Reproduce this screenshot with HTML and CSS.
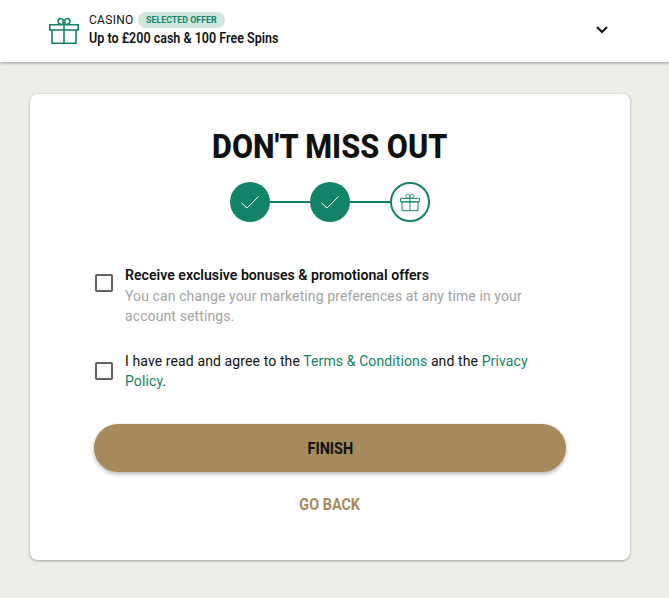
FILE: index.html
```html
<!DOCTYPE html>
<html lang="en">
<head>
<meta charset="utf-8">
<title>Don't miss out</title>
<link rel="stylesheet" href="styles.css">
</head>
<body>
<svg class="defs" aria-hidden="true">
  <symbol id="gift" viewBox="0 0 30 28">
    <path d="M.8 7.800h28.400v5.200H.8zM3 13h24v13.300H3zM15 7.800v18.500M12.500 7.500C10 7 8.600 5.500 9 3.700C9.500 1.200 13 .8 14 3C14.800 4.500 14.500 6 13.200 7.500M17.500 7.500C20 7 21.400 5.500 21 3.700C20.500 1.200 17 .8 16 3C15.200 4.500 15.500 6 16.800 7.500"/>
  </symbol>
</svg>
<header class="offer">
  <svg class="offer-icon"><use href="#gift"/></svg>
  <div class="offer-body">
    <div class="offer-top"><span class="category">CASINO</span><span class="badge"><span class="badge-text">SELECTED OFFER</span></span></div>
    <div class="offer-title"><span>Up to £200 cash &amp; 100 Free Spins</span></div>
  </div>
  <svg class="chevron" viewBox="0 0 12 8"><path d="M1 1l5 5 5-5"/></svg>
</header>
<main class="card">
  <h1><span>DON'T MISS OUT</span></h1>
  <div class="steps">
    <div class="step done"><svg class="check" viewBox="0 0 18 13"><path d="M.5 7l5.500 5L17.500.5"/></svg></div>
    <div class="line"></div>
    <div class="step done"><svg class="check" viewBox="0 0 18 13"><path d="M.5 7l5.500 5L17.500.5"/></svg></div>
    <div class="line"></div>
    <div class="step current"><svg class="step-gift"><use href="#gift"/></svg></div>
  </div>
  <div class="option marketing">
    <span class="box"></span>
    <div class="copy"><div class="label"><span>Receive exclusive bonuses &amp; promotional offers</span></div><p class="hint">You can change your marketing preferences at any time in your<br>account settings.</p></div>
  </div>
  <div class="option terms">
    <span class="box"></span>
    <p class="copy">I have read and agree to the <a>Terms &amp; Conditions</a> and the <a>Privacy<br>Policy</a>.</p>
  </div>
  <button class="finish"><span>FINISH</span></button>
  <button class="back"><span>GO BACK</span></button>
</main>
</body>
</html>
```
FILE: styles.css
```css
* { box-sizing: border-box; }
body { margin: 0; min-height: 598px; background: #eeede8; color: #111; font-family: Roboto, "Liberation Sans", sans-serif; }
h1, p { margin: 0; }
.defs { position: absolute; width: 0; height: 0; }
h1 span, .offer-title span, .category, .badge-text, .label span, button span { display: inline-block; white-space: nowrap; transform-origin: left center; }
.offer { display: flex; height: 62px; padding: 12px 60px 0 49px; background: #fff; box-shadow: 0 1px 3px rgba(20, 40, 30, .42); }
.offer-icon { width: 30px; height: 28px; margin-top: 5px; fill: none; stroke: #128268; stroke-width: 1.6; }
.offer-body { flex: 1; margin-left: 10px; }
.offer-top { display: flex; height: 16px; }
.category { width: 49px; font-size: 12px; line-height: 16px; letter-spacing: .3px; }
.badge { width: 87px; height: 16px; border-radius: 8px; background: #cfe7e0; color: #128268; padding-left: 8px; font-size: 9.500px; line-height: 16px; font-weight: 700; }
.badge-text { transform: scaleX(.93); }
.offer-title { font-size: 14px; line-height: 20px; font-weight: 600; }
.offer-title span { transform: scaleX(.895); }
.chevron { width: 12px; height: 8px; margin: 14px 1px 0 0; fill: none; stroke: #111; stroke-width: 2; }
.card { width: 600px; height: 466px; margin: 32px 0 0 30px; padding: 32px 64px 0; border-radius: 8px; background: #fff; box-shadow: 0 1px 3px rgba(0, 0, 0, .32); }
h1 { height: 40px; text-align: center; font-size: 34px; line-height: 40px; font-weight: 800; }
h1 span { transform: scaleX(.9); transform-origin: center; }
.steps { display: flex; align-items: center; justify-content: center; margin-top: 16px; }
.step { display: flex; align-items: center; justify-content: center; width: 40px; height: 40px; border-radius: 50%; }
.done { background: #128268; }
.current { border: 2px solid #128268; }
.line { width: 40px; height: 2px; background: #128268; }
.check { width: 18px; height: 13px; fill: none; stroke: #fff; stroke-width: 1; }
.step-gift { width: 20px; height: 19px; fill: none; stroke: #128268; stroke-width: 1.5; }
.option { display: flex; align-items: flex-start; padding-left: 1px; }
.box { width: 18px; height: 18px; margin-top: 9px; border: 2px solid #606060; border-radius: 2px; }
.copy { margin-left: 12px; font-size: 14px; line-height: 20px; letter-spacing: .11px; white-space: nowrap; }
.marketing { height: 86px; margin-top: 43px; }
.label { height: 21px; font-size: 15px; line-height: 20px; letter-spacing: 0; font-weight: 600; }
.label span { transform: scaleX(.942); }
.hint { color: #a3a3a3; }
.terms { height: 73px; }
.terms .box { margin-top: 11px; }
a { color: #128268; }
button { display: flex; align-items: center; justify-content: center; padding: 0; border: 0; font: 700 16px/20px Roboto, "Liberation Sans", sans-serif; }
button span { transform: scaleX(.9); transform-origin: center; }
.finish { width: 472px; height: 48px; padding-top: 1px; border-radius: 24px; background: #a68a5b; color: #111; box-shadow: 0 2px 4px rgba(0, 0, 0, .3); }
.back { width: 100%; height: 20px; margin-top: 23px; background: none; color: #a68a5b; }
```
